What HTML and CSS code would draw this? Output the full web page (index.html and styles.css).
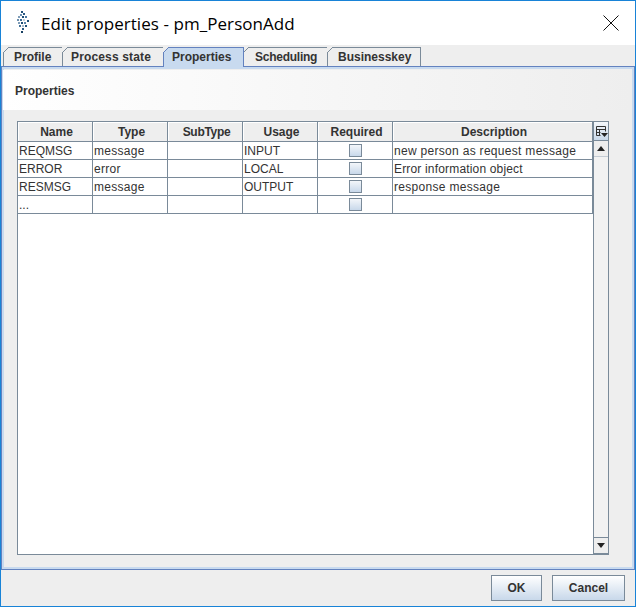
FILE: index.html
```html
<!DOCTYPE html>
<html lang="en">
<head>
    <meta charset="UTF-8">
    <meta name="viewport" content="width=device-width, initial-scale=1.0">
    <title>Edit properties - pm_PersonAdd</title>
    <link rel="stylesheet" href="styles.css">
</head>
<body>
    <div class="window">
        <div class="titlebar">
            <svg class="app-icon" width="14" height="22" viewBox="0 0 14 22">
                <rect x="5" y="0" width="2" height="2" fill="#1f5078"/>
                <rect x="7" y="2" width="2" height="2" fill="#2c5a85"/>
                <rect x="4" y="3" width="2" height="2" fill="#6c8fae"/>
                <rect x="2" y="5" width="2" height="2" fill="#7f9db8"/>
                <rect x="6" y="5" width="2" height="2" fill="#1f5078"/>
                <rect x="9" y="5" width="2" height="2" fill="#4b7aa3"/>
                <rect x="1" y="8" width="2" height="2" fill="#6c8fae"/>
                <rect x="4" y="8" width="2" height="2" fill="#3f6f98"/>
                <rect x="7" y="8" width="2" height="2" fill="#c0ccd6"/>
                <rect x="11" y="9" width="2" height="2" fill="#1f5078"/>
                <rect x="2" y="11" width="2" height="2" fill="#7f9db8"/>
                <rect x="5" y="11" width="2" height="2" fill="#1f5078"/>
                <rect x="8" y="11" width="2" height="2" fill="#5a85a9"/>
                <rect x="3" y="14" width="2" height="2" fill="#3f6f98"/>
                <rect x="6" y="14" width="2" height="2" fill="#a9bccb"/>
                <rect x="9" y="14" width="2" height="2" fill="#1f5078"/>
                <rect x="6" y="17" width="2" height="2" fill="#2c5a85"/>
                <rect x="5" y="20" width="2" height="2" fill="#163f63"/>
            </svg>
            <span class="title">Edit properties - pm_PersonAdd</span>
            <svg class="close-icon" width="16" height="16" viewBox="0 0 16 16">
                <path d="M0.5 0.5L15.5 15.5M15.5 0.5L0.5 15.5" stroke="#111" fill="none"/>
            </svg>
        </div>

        <div class="tabs">
            <div class="tab tab-profile">Profile</div>
            <div class="tab tab-state">Process state</div>
            <div class="tab tab-props selected">Properties</div>
            <div class="tab tab-sched">Scheduling</div>
            <div class="tab tab-key">Businesskey</div>
        </div>

        <div class="panel">
            <div class="panel-head">Properties</div>
            <div class="panel-body">
                <div class="table-box">
                    <div class="table-wrap">
                        <table class="props">
                            <thead>
                                <tr>
                                    <th class="col">Name</th>
                                    <th class="col">Type</th>
                                    <th class="col narrow">SubType</th>
                                    <th class="col">Usage</th>
                                    <th class="col">Required</th>
                                    <th class="col-desc">Description</th>
                                </tr>
                            </thead>
                            <tbody>
                                <tr>
                                    <td>REQMSG</td>
                                    <td class="wide">message</td>
                                    <td></td>
                                    <td>INPUT</td>
                                    <td class="check"><span class="checkbox"></span></td>
                                    <td class="wide">new person as request message</td>
                                </tr>
                                <tr>
                                    <td>ERROR</td>
                                    <td class="wide">error</td>
                                    <td></td>
                                    <td>LOCAL</td>
                                    <td class="check"><span class="checkbox"></span></td>
                                    <td class="mid">Error information object</td>
                                </tr>
                                <tr>
                                    <td>RESMSG</td>
                                    <td class="wide">message</td>
                                    <td></td>
                                    <td>OUTPUT</td>
                                    <td class="check"><span class="checkbox"></span></td>
                                    <td class="wide">response message</td>
                                </tr>
                                <tr>
                                    <td>...</td>
                                    <td></td>
                                    <td></td>
                                    <td></td>
                                    <td class="check"><span class="checkbox"></span></td>
                                    <td></td>
                                </tr>
                            </tbody>
                        </table>
                    </div>
                    <div class="scrollbar">
                        <div class="corner">
                            <svg width="13" height="13" viewBox="0 0 13 13">
                                <path d="M1.5 1.5H10.5V6.5M1.5 1.5V10.5H5.5M1.5 4.5H10.5M4.5 4.5V10.5M1.5 7.5H5.5" stroke="#333" fill="none"/>
                                <path d="M6 8H13L9.5 12Z" fill="#222"/>
                            </svg>
                        </div>
                        <div class="arrow"><span class="tri-up"></span></div>
                        <div class="track"></div>
                        <div class="arrow arrow-down"><span class="tri-down"></span></div>
                    </div>
                </div>
            </div>
        </div>

        <div class="buttons">
            <button type="button" class="btn btn-ok">OK</button>
            <button type="button" class="btn btn-cancel">Cancel</button>
        </div>
    </div>
</body>
</html>
```

FILE: styles.css
```css
* {
    box-sizing: border-box;
}
body {
    margin: 0;
    font-family: "Liberation Sans", Arial, sans-serif;
    font-size: 12px;
    color: #222;
}
.window {
    width: 636px;
    height: 607px;
    display: flex;
    flex-direction: column;
    border: 1px solid #1883d7;
    background-color: #eeeeee;
}
.titlebar {
    height: 44px;
    flex: none;
    display: flex;
    align-items: center;
    background-color: #fff;
    padding-left: 15px;
}
.app-icon {
    flex: none;
    margin-top: -2px;
}
.title {
    margin-left: 11px;
    font-family: "Open Sans", sans-serif;
    font-size: 17px;
    letter-spacing: 0.06px;
    color: #000;
    flex: 1;
}
.close-icon {
    flex: none;
    margin-right: 16px;
}
.tabs {
    height: 21px;
    flex: none;
    display: flex;
    align-items: flex-end;
    padding: 2px 0 0 2px;
}
.tab {
    position: relative;
    height: 19px;
    border: 1px solid #7a8a99;
    border-bottom: none;
    margin-right: -1px;
    font-weight: bold;
    line-height: 18px;
    color: #333;
    background-color: #eeeeee;
}
.tab::before {
    content: "";
    position: absolute;
    top: -1px;
    left: -1px;
    width: 6px;
    height: 6px;
    background: linear-gradient(135deg, #eeeeee 0 42%, #7a8a99 42% 58%, transparent 58%);
}
.tab.selected {
    background-color: #c8daef;
    border-color: #6382bf;
    height: 20px;
    margin-bottom: -1px;
    z-index: 1;
}
.tab.selected::before {
    background: linear-gradient(135deg, #eeeeee 0 42%, #6382bf 42% 58%, transparent 58%);
}
.tab-profile { width: 60px; padding-left: 10px; }
.tab-state { width: 102px; padding-left: 8px; letter-spacing: 0.15px; }
.tab-props { width: 81px; padding-left: 8px; }
.tab-sched { width: 85px; padding-left: 11px; letter-spacing: -0.25px; }
.tab-key { width: 94px; padding-left: 10px; }
.panel {
    flex: 1;
    display: flex;
    flex-direction: column;
    border: 1px solid #6382bf;
    box-shadow: inset 0 0 0 2px #c8daef;
    padding: 3px 2px 2px 1px;
}
.panel-head {
    height: 40px;
    flex: none;
    padding: 14px 0 0 12px;
    font-weight: bold;
    color: #333;
    background: linear-gradient(to right, #ffffff, #eeeeee);
}
.panel-body {
    flex: 1;
    padding: 11px 23px 12px 14px;
}
.table-box {
    height: 100%;
    display: flex;
    border: 1px solid #7a8a99;
    border-right: none;
    background-color: #fff;
}
.table-wrap {
    flex: 1;
    background-color: #fff;
}
.props {
    border-collapse: separate;
    border-spacing: 0;
    table-layout: fixed;
    width: 100%;
}
.props th {
    height: 20px;
    padding: 1px 0 0 3px;
    font-weight: bold;
    color: #333;
    text-align: center;
    background-color: #eeeeee;
    border-right: 1px solid #7a8a99;
    border-bottom: 1px solid #7a8a99;
    box-shadow: inset 1px 1px 0 #fff;
}
.props .col {
    width: 75px;
}
.props th.narrow {
    letter-spacing: -0.3px;
}
.props td {
    height: 18px;
    padding: 1px 0 0 1px;
    color: #333;
    border-right: 1px solid #7a8a99;
    border-bottom: 1px solid #7a8a99;
    white-space: nowrap;
    overflow: hidden;
}
.props td.wide {
    letter-spacing: 0.3px;
}
.props td.mid {
    letter-spacing: 0.17px;
}
.props td.check {
    padding: 2px 0 0;
    vertical-align: top;
}
.checkbox {
    display: block;
    width: 13px;
    height: 13px;
    margin: 0 auto;
    border: 1px solid #7a8a99;
    background: linear-gradient(to bottom, #f3f6fa, #c8d8ea);
}
.scrollbar {
    width: 16px;
    flex: none;
    display: flex;
    flex-direction: column;
    background-color: #f2f2f2;
    border-left: 1px solid #7a8a99;
    border-right: 1px solid #7a8a99;
    border-bottom: 1px solid #7a8a99;
}
.corner {
    height: 20px;
    flex: none;
    display: flex;
    align-items: center;
    justify-content: center;
    background: linear-gradient(to bottom, #f4f7fb, #c8d8ea);
    border-bottom: 1px solid #7a8a99;
    margin-top: -1px;
    border-top: 1px solid #7a8a99;
}
.arrow {
    height: 16px;
    flex: none;
    display: flex;
    align-items: center;
    justify-content: center;
    background-color: #eeeeee;
    border-bottom: 1px solid #c4ccd4;
}
.arrow-down {
    border-bottom: none;
    border-top: 1px solid #7a8a99;
}
.track {
    flex: 1;
}
.tri-up {
    width: 0;
    height: 0;
    border-left: 4px solid transparent;
    border-right: 4px solid transparent;
    border-bottom: 5px solid #222;
}
.tri-down {
    width: 0;
    height: 0;
    border-left: 4px solid transparent;
    border-right: 4px solid transparent;
    border-top: 5px solid #222;
}
.buttons {
    height: 36px;
    flex: none;
    display: flex;
    justify-content: flex-end;
    align-items: flex-start;
    gap: 10px;
    padding: 5px 10px 0 0;
}
.btn {
    height: 26px;
    padding: 0;
    border: 1px solid #7a8a99;
    font-family: "Liberation Sans", Arial, sans-serif;
    font-size: 12px;
    font-weight: bold;
    color: #333;
    background: linear-gradient(to bottom, #ffffff, #c8d8ea);
}
.btn-ok { width: 51px; }
.btn-cancel { width: 73px; }
```
